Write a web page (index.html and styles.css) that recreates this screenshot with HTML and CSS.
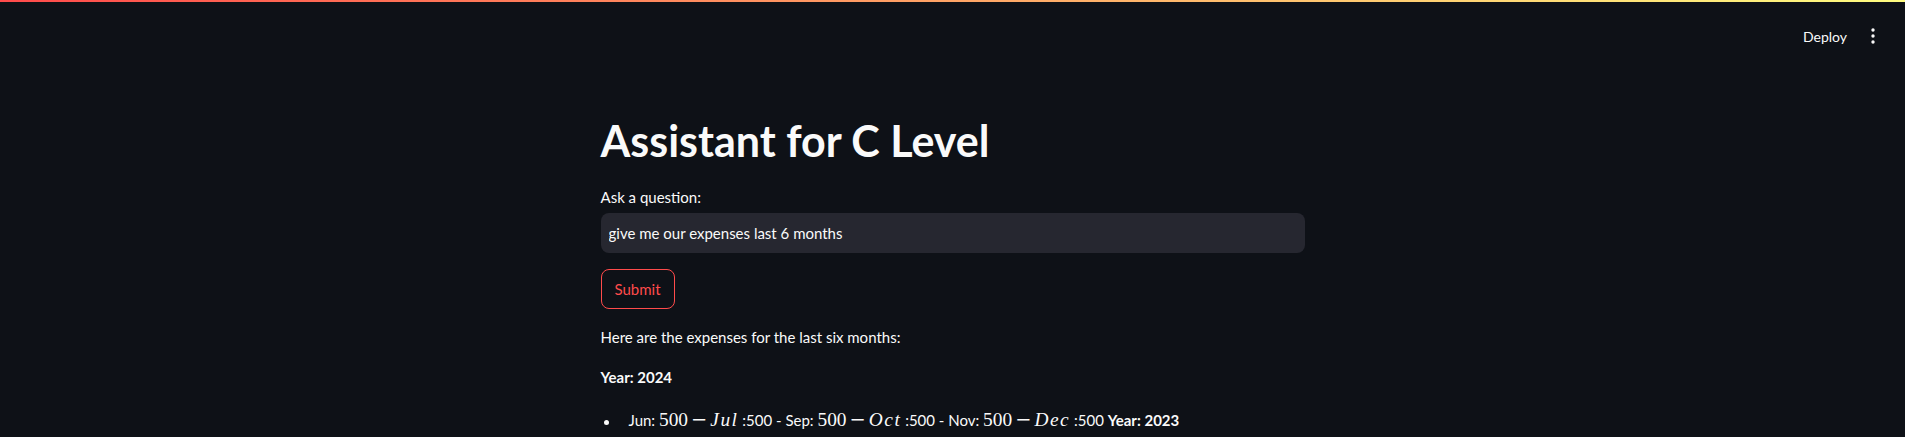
FILE: index.html
```html
<!DOCTYPE html>
<html lang="en">
  <head>
    <meta charset="UTF-8" />
    <meta name="viewport" content="width=device-width, initial-scale=1.0" />
    <title>Assistant for C Level</title>
    <link rel="stylesheet" href="styles.css">
  </head>
  <body>
    <div class="decoration"></div>
    <header class="toolbar">
      <button class="deploy">Deploy</button>
      <button class="menu" aria-label="Main menu">
        <svg width="4" height="16" viewBox="0 0 4 16">
          <circle cx="2" cy="2" r="1.7" fill="#fafafa" />
          <circle cx="2" cy="8" r="1.7" fill="#fafafa" />
          <circle cx="2" cy="14" r="1.7" fill="#fafafa" />
        </svg>
      </button>
    </header>
    <div class="block">
      <h1>Assistant for C Level</h1>
      <label class="label" for="question">Ask a question:</label>
      <input class="field" id="question" type="text" value="give me our expenses last 6 months" />
      <button class="btn">Submit</button>
      <div class="answer">
        <p>Here are the expenses for the last six months:</p>
        <p><strong>Year: 2024</strong></p>
        <ul>
          <li>Jun: <span class="katex">500<span class="mbin">−</span><span class="mi">Jul</span></span> :500 - Sep: <span class="katex">500<span class="mbin">−</span><span class="mi">Oct</span></span> :500 - Nov: <span class="katex">500<span class="mbin">−</span><span class="mi">Dec</span></span> :500 <strong>Year: 2023</strong></li>
        </ul>
      </div>
    </div>
  </body>
</html>
```

FILE: styles.css
```css
body {
  margin: 0;
  background-color: #0e1117;
  color: #fafafa;
  font-family: Lato, "Noto Sans", sans-serif;
}
button,
input {
  font-family: inherit;
  font-weight: 400;
}
.decoration {
  height: 2px;
  background: linear-gradient(90deg, #ff4b4b, #fffd80);
}
.toolbar {
  height: 58px;
  box-sizing: border-box;
  padding: 10px 20px 0 0;
  display: flex;
  justify-content: flex-end;
  align-items: center;
  gap: 2px;
}
.deploy {
  background: none;
  border: none;
  color: #fafafa;
  font-size: 14px;
  padding: 4px 12px;
  cursor: pointer;
}
.menu {
  width: 24px;
  height: 32px;
  background: none;
  border: none;
  padding: 0;
  display: flex;
  align-items: center;
  justify-content: center;
  cursor: pointer;
}
.block {
  width: 704px;
  margin: 0 auto;
  padding-top: 35px;
}
h1 {
  margin: 0;
  padding-top: 20px;
  font-size: 43px;
  line-height: 52.8px;
  font-weight: 700;
}
.label {
  display: block;
  margin: 18px 0 5px;
  font-size: 15px;
  line-height: 22px;
}
.field {
  display: block;
  width: 100%;
  height: 40px;
  box-sizing: border-box;
  padding: 0 8px;
  border: none;
  border-radius: 8px;
  background-color: #262730;
  color: #fafafa;
  font-size: 15px;
  outline: none;
}
.btn {
  display: block;
  margin-top: 16px;
  height: 40px;
  padding: 0 13px;
  border: 1px solid #ff4b4b;
  border-radius: 8px;
  background: transparent;
  color: #ff4b4b;
  font-size: 15px;
  cursor: pointer;
}
.answer p {
  margin: 16px 0 0;
  font-size: 15px;
  line-height: 24px;
}
.answer ul {
  margin: 19px 0 0;
  padding: 0;
  list-style: none;
  font-size: 15px;
  line-height: 24px;
}
.answer li::before {
  content: "";
  display: inline-block;
  width: 5px;
  height: 5px;
  border-radius: 50%;
  background-color: #fafafa;
  vertical-align: middle;
  margin: 0 20px 0 3px;
}
.katex {
  font-family: "Liberation Serif", "DejaVu Serif", serif;
  font-size: 19.4px;
}
.mbin {
  margin: 0 3px;
  font-family: "DejaVu Serif", serif;
}
.mi {
  font-style: italic;
  letter-spacing: 1.5px;
}
```
